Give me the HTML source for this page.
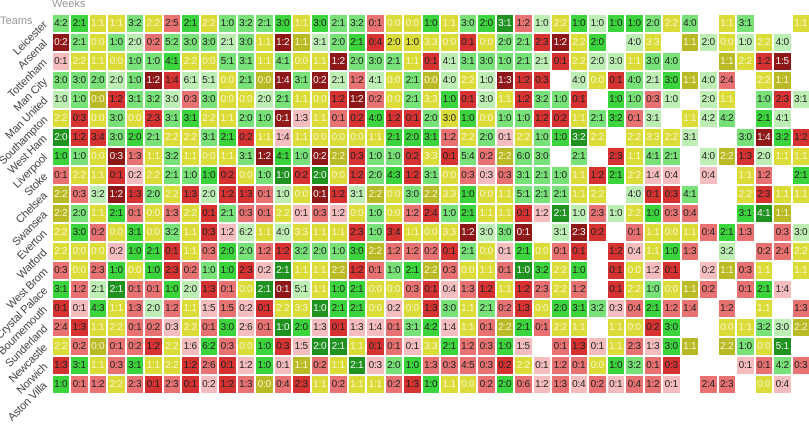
<!DOCTYPE html>
<html><head><meta charset="utf-8">
<style>
body{margin:0;width:809px;height:417px;background:#fff;position:relative;overflow:hidden;font-family:"Liberation Sans",sans-serif}
.c{position:absolute;width:16.5px;height:17px;line-height:17px;text-align:center;font-size:10px;letter-spacing:-0.2px}
.lab{position:absolute;right:763px;font-size:11px;letter-spacing:-0.2px;color:#444;white-space:nowrap;transform-origin:100% 50%;transform:rotate(-45deg);line-height:13px}
.t{position:absolute;font-size:11px;color:#999}
</style></head><body>
<div class="t" style="left:52px;top:-2px">Weeks</div>
<div class="t" style="left:0;top:15px">Teams</div>
<div id="g"></div>
<script>
var rows=[
"m4:2 g2:1 Y1:1 Y1:1 m3:2 Y2:2 r2:5 g2:1 Y2:2 m1:0 m3:2 m2:1 g3:0 Y1:1 g3:0 m2:1 m3:2 r0:1 Y0:0 Y0:0 g1:0 Y1:1 m3:0 g2:0 G3:1 r1:2 l1:0 Y2:2 g1:0 l1:0 g1:0 g1:0 m2:0 Y2:2 m4:0 . Y1:1 m3:1 . . Y1:1",
"D0:2 m2:1 Y0:0 m1:0 l2:0 r0:2 m5:2 m3:0 m3:0 l2:1 m3:0 Y1:1 D1:2 o1:1 l3:1 m2:0 g2:1 R0:4 Y2:0 Y1:0 Y3:3 Y0:0 R0:1 Y0:0 m2:0 m2:1 R2:3 D1:2 Y2:2 g2:0 . l4:0 Y3:3 . o1:1 l2:0 Y0:0 l1:0 Y2:2 l4:0 .",
"p0:1 Y2:2 Y1:1 Y0:0 m1:0 m1:0 g4:1 Y2:2 Y0:0 m5:1 m3:1 Y1:1 m4:1 Y0:0 Y1:1 D1:2 m2:0 m3:0 m2:1 Y1:1 R0:1 l4:1 m3:1 m3:0 m1:0 m2:1 l2:1 R0:1 Y2:2 l2:0 l3:0 Y1:1 m3:0 m4:0 . . o1:1 Y2:2 R1:2 D1:5 .",
"m3:0 m3:0 m2:0 l2:0 m1:0 D1:2 R1:4 l6:1 l5:1 Y0:0 m2:1 o0:0 D1:4 m3:1 D0:2 l2:1 r1:2 l4:1 Y0:0 m2:1 o0:0 l4:0 Y2:2 l1:0 D1:3 R1:2 R0:3 . l4:0 Y0:0 R0:1 m4:0 l2:1 g3:0 o1:1 l4:0 r2:4 . Y2:2 o1:1 .",
"l1:0 m1:0 o0:0 R1:2 m3:1 m3:2 l3:0 r0:3 m3:0 Y0:0 Y0:0 l2:0 m2:1 Y1:1 Y0:0 R1:2 D1:2 r0:2 Y0:0 m2:1 Y3:3 g1:0 R0:1 l3:0 Y1:1 R1:2 m3:2 m1:0 R0:1 . g1:0 m1:0 r0:3 l1:0 . l2:0 Y1:1 . m1:0 R2:3 l3:1",
"Y2:2 R0:3 Y0:0 m3:0 Y0:0 R2:3 m3:1 g3:1 Y2:2 Y1:1 m2:0 m1:0 D0:1 p1:3 Y1:1 r0:1 R0:2 g4:0 R1:2 R0:1 m2:0 Y3:0 g1:0 Y0:0 m1:0 m1:0 R1:2 R0:2 Y1:1 m2:1 g3:2 r0:1 l3:1 . Y1:1 l4:2 m4:2 . g2:1 l4:1 .",
"G2:0 R1:2 R3:4 m3:0 g2:0 m2:1 Y2:2 Y2:2 m3:1 g2:1 R0:2 Y1:1 p1:4 Y1:1 Y0:0 Y0:0 Y0:0 Y1:1 g2:1 g2:0 g3:1 r1:2 Y2:2 m2:0 p0:1 Y2:2 m1:0 g1:0 G3:2 Y2:2 . Y2:2 Y3:3 Y2:2 l3:1 . . m3:0 D1:4 g3:2 R1:2",
"g1:0 m1:0 Y0:0 D0:3 r1:3 Y1:1 m3:2 Y1:1 Y0:0 Y1:1 m3:1 D1:2 g4:1 m1:0 D0:2 o2:2 R0:3 m1:0 m1:0 R0:2 Y3:3 R0:1 m5:4 r0:2 o2:2 m6:0 m3:0 . m2:1 . R2:3 Y1:1 m4:1 m2:1 . l4:0 o2:2 R1:3 l2:0 Y1:1 Y1:1",
"r0:1 Y2:2 Y1:1 R0:1 p0:2 Y2:2 m2:1 m1:0 g1:0 R0:2 Y0:0 m1:0 G1:0 R0:2 G2:0 Y0:0 R1:2 m2:0 g4:3 R1:2 m3:1 Y0:0 r0:3 p0:3 r0:3 m3:1 m2:1 m1:0 Y1:1 R1:2 g2:1 Y2:2 p1:4 p0:4 . p0:4 . Y1:1 r1:2 . g2:1",
"o2:2 r0:3 l3:2 D1:2 R1:3 m2:0 Y2:2 R1:3 l2:0 R1:2 R1:3 r0:1 l1:0 Y0:0 D0:1 R1:2 l3:1 o2:2 Y0:0 m3:0 o2:2 Y3:3 g1:0 Y0:0 Y1:1 m5:1 m2:1 m2:1 Y1:1 Y2:2 . l4:0 R0:1 R0:3 m4:1 . . Y2:2 R2:3 Y1:1 Y1:1",
"o2:2 m2:0 Y1:1 g2:1 r0:1 Y0:0 r1:3 Y2:2 R0:1 m2:1 r0:3 r0:1 Y2:2 p0:1 r0:3 p1:2 Y0:0 m1:0 Y0:0 r1:2 R2:4 m1:0 g2:1 Y1:1 Y1:1 R0:1 p1:2 G2:1 l1:0 r2:3 l1:0 Y2:2 g1:0 r0:3 r0:4 . . g3:1 G4:1 o1:1 .",
"Y2:2 g3:0 r0:2 Y0:0 g3:1 Y0:0 m3:2 Y1:1 R0:3 p1:2 l6:2 Y1:1 l4:0 Y3:3 Y1:1 Y1:1 R2:3 m1:0 R3:4 Y1:1 Y0:0 Y3:3 D1:2 l3:0 m3:0 D0:1 . l3:1 D2:3 R0:2 . r0:1 Y1:1 Y0:0 Y1:1 r0:4 g2:1 r1:3 . r0:3 l3:0",
"Y2:2 Y0:0 Y0:0 p0:2 g1:0 g2:1 R0:1 Y1:1 r0:3 g2:0 m2:0 r1:2 R1:2 m3:2 m2:0 m1:0 g3:0 o2:2 r1:2 r1:2 r0:2 R0:1 m2:1 Y0:0 p0:1 g2:1 Y0:0 r0:1 R0:1 . R1:2 p0:4 Y1:1 g1:0 r1:3 . l3:2 . r0:2 r2:4 Y2:2",
"r0:3 Y0:0 r2:3 g1:0 Y0:0 g1:0 R2:3 r0:2 m1:0 g1:0 R2:3 p0:2 G2:1 Y1:1 Y1:1 o2:2 R1:2 r0:1 m1:0 g2:1 o2:2 r0:3 Y0:0 Y1:1 r0:1 G1:0 g3:2 Y2:2 g1:0 . R0:1 Y0:0 p1:2 R0:1 . p0:2 o1:1 r0:3 Y1:1 . Y1:1",
"g3:1 r1:2 l2:1 G2:1 r0:1 r0:1 g1:0 l2:0 R1:3 r0:1 Y0:0 G2:1 D0:1 l5:1 Y1:1 g1:0 g2:1 Y0:0 Y0:0 r0:3 R0:1 p0:4 r1:3 R1:2 Y1:1 R1:2 r2:3 Y2:2 r1:2 . R0:1 Y2:2 m1:0 Y0:0 o1:1 r0:2 . r0:1 g2:1 p1:4 .",
"R0:1 p0:1 g4:3 Y1:1 r1:3 l2:0 r1:2 Y1:1 p1:5 r1:5 p0:2 R0:1 Y2:2 Y3:3 G1:0 g2:1 g2:1 Y0:0 p0:2 Y0:0 R1:3 m3:0 Y1:1 m2:1 r0:2 R1:3 Y0:0 g2:0 g3:1 m3:2 p0:3 r0:4 g2:1 r1:2 r1:4 . r1:2 . Y1:1 . r1:3",
"r2:4 R1:3 Y1:1 Y2:2 r0:1 r0:2 p0:3 Y2:2 r0:1 g3:0 p2:6 r0:1 G1:0 g2:0 p1:3 R0:1 p1:3 p1:4 r0:1 m3:1 g4:2 p1:4 Y1:1 r0:1 o2:2 g2:1 r0:1 Y2:2 Y1:1 . Y1:1 Y0:0 R0:2 g3:0 . . Y0:0 Y1:1 m3:2 l3:0 o2:2",
"Y2:2 r0:2 o0:0 r0:1 r0:2 R1:2 Y2:2 p1:6 g6:2 r0:3 Y0:0 g1:0 R0:3 p1:5 G2:0 G2:1 Y1:1 R0:1 r0:1 p0:1 Y3:3 g2:1 r1:2 r0:3 g1:0 p1:5 . r0:1 R1:3 p0:1 Y1:1 r2:3 p1:3 g3:0 o1:1 . o2:2 m1:0 Y0:0 G5:1 .",
"R1:3 g3:1 Y1:1 r0:3 g3:1 Y1:1 Y2:2 R1:2 r2:6 R0:1 p1:2 g1:0 p0:1 o1:1 r0:2 Y1:1 G2:1 p0:3 m2:0 g1:0 r1:3 r0:3 r4:5 r0:3 R0:2 Y2:2 p0:1 r1:2 r0:1 Y0:0 g1:0 m3:2 r0:1 R0:3 . . . p0:1 r0:1 m4:2 r0:3",
"g1:0 r0:1 r1:2 Y2:2 r2:3 R0:1 r2:3 R0:1 p0:2 R1:2 r1:3 o0:0 r0:4 R2:3 Y1:1 r0:2 Y1:1 Y1:1 r0:2 R1:3 g1:0 Y1:1 Y0:0 r0:2 g2:0 r0:6 p1:2 r1:3 p0:4 r0:2 p0:1 r0:4 r1:2 p0:1 . r2:4 r2:3 . Y0:0 p0:4 ."
];
var col={G:"#1f921f",g:"#3cd43c",m:"#78e178",l:"#bdeeb4",Y:"#dcdc38",o:"#baba26",p:"#f5bdbd",r:"#e87272",R:"#d63232",D:"#8e1818"};
var teams=["Leicester","Arsenal","Tottenham","Man City","Man United","Southampton","West Ham","Liverpool","Stoke","Chelsea","Swansea","Everton","Watford","West Brom","Crystal Palace","Bournemouth","Sunderland","Newcastle","Norwich","Aston Villa"];
var h="";
rows.forEach(function(row,r){
  var toks=row.split(" ");
  toks.forEach(function(t,c){
    if(t==".")return;
    var k=t[0],s=t.slice(1);
    var draw=s[0]==s[2];
    var tc="#222";
    if(k=="D"||k=="G")tc="#f2f2f2";
    else if(draw&&(k=="Y"||k=="o"))tc="#f6f6d0";
    h+='<div class="c" style="left:'+(52.5+18.5*c)+'px;top:'+(14.5+19*r)+'px;background:'+col[k]+';color:'+tc+'">'+s+'</div>';
  });
  h+='<div class="lab" style="top:'+(16.5+19*r)+'px">'+teams[r]+'</div>';
});
document.getElementById("g").innerHTML=h;
</script>
</body></html>
